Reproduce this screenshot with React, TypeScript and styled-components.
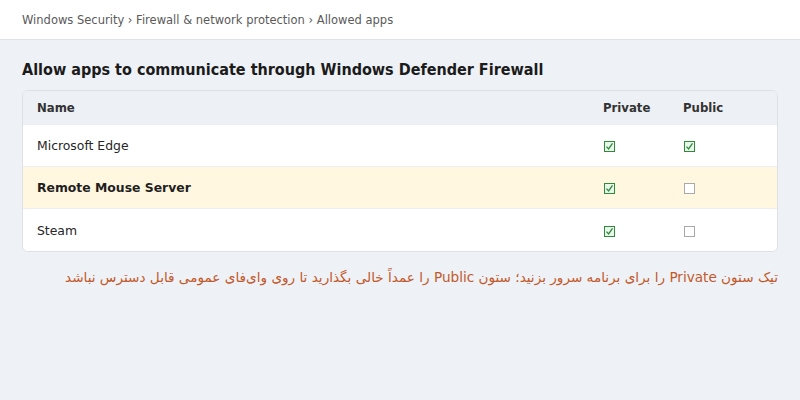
import React from "react";
import styled, { createGlobalStyle } from "styled-components";

const Global = createGlobalStyle`
  html, body { margin: 0; padding: 0; }
  body {
    background: #eef1f5;
    font-family: "DejaVu Sans", Verdana, sans-serif;
    width: 800px;
    height: 400px;
    overflow: hidden;
  }
`;

const Page = styled.div`
  width: 800px;
  height: 400px;
  background: #eef1f5;
  display: flex;
  flex-direction: column;
`;

const TopBar = styled.div`
  height: 40px;
  background: #ffffff;
  border-bottom: 1px solid #dfe3e8;
  display: flex;
  align-items: center;
  padding: 1px 22px 0;
  font-size: 11.5px;
  color: #5a5a5a;
  box-sizing: border-box;
`;

const Content = styled.div`
  padding: 20px 22px 0;
  display: flex;
  flex-direction: column;
`;

const Title = styled.h1`
  margin: 0 0 10px;
  font-family: "DejaVu Sans Condensed", "DejaVu Sans", sans-serif;
  font-size: 16px;
  font-weight: bold;
  color: #1b1b1b;
  line-height: 20px;
`;

const Card = styled.div`
  background: #ffffff;
  border: 1px solid #dde1e6;
  border-radius: 6px;
  overflow: hidden;
`;

const Row = styled.div<{ $kind?: "head" | "hl" | "plain"; $last?: boolean }>`
  display: grid;
  grid-template-columns: 1fr 80px 94px;
  align-items: center;
  height: ${(p) => (p.$kind === "head" ? "34px" : "42px")};
  padding-left: 14px;
  box-sizing: border-box;
  background: ${(p) =>
    p.$kind === "head" ? "#edf0f4" : p.$kind === "hl" ? "#fff7e0" : "#ffffff"};
  border-bottom: ${(p) => (p.$last ? "none" : "1px solid #eceff2")};
  font-size: 12.4px;
  color: #222;
`;

const Name = styled.div<{ $bold?: boolean }>`
  font-weight: ${(p) => (p.$bold ? "bold" : "normal")};
  color: ${(p) => (p.$bold ? "#1f1f1f" : "#262626")};
`;

const HeadCell = styled.div`
  font-family: "DejaVu Sans Condensed", "DejaVu Sans", sans-serif;
  font-size: 13px;
  font-weight: bold;
  color: #333;
`;

const BoxCell = styled.div`
  display: flex;
  align-items: center;
  padding: 2px 0 0 1px;
`;

const Box = styled.span<{ $on: boolean }>`
  display: inline-flex;
  align-items: center;
  justify-content: center;
  width: 11px;
  height: 11px;
  box-sizing: border-box;
  border: 1px solid ${(p) => (p.$on ? "#2f8a3c" : "#a9a9a9")};
  background: ${(p) => (p.$on ? "#e9f6ea" : "#ffffff")};
`;

const Note = styled.p`
  margin: 17px 0 0;
  direction: rtl;
  text-align: right;
  font-size: 13.6px;
  color: #c2592b;
  font-family: "DejaVu Sans", sans-serif;
`;

const Check = ({ on }: { on: boolean }) => (
  <BoxCell>
    <Box $on={on}>
      {on && (
        <svg width="9" height="9" viewBox="0 0 9 9">
          <path d="M1.5 4.6 L3.6 6.9 L7.5 1.4" fill="none" stroke="#2f8a3c" strokeWidth="1.3" />
        </svg>
      )}
    </Box>
  </BoxCell>
);

const apps = [
  { name: "Microsoft Edge", priv: true, pub: true, hl: false },
  { name: "Remote Mouse Server", priv: true, pub: false, hl: true },
  { name: "Steam", priv: true, pub: false, hl: false },
];

export default function App() {
  return (
    <Page>
      <Global />
      <TopBar>Windows Security › Firewall &amp; network protection › Allowed apps</TopBar>
      <Content>
        <Title>Allow apps to communicate through Windows Defender Firewall</Title>
        <Card>
          <Row $kind="head">
            <HeadCell>Name</HeadCell>
            <HeadCell>Private</HeadCell>
            <HeadCell>Public</HeadCell>
          </Row>
          {apps.map((a, i) => (
            <Row key={a.name} $kind={a.hl ? "hl" : "plain"} $last={i === apps.length - 1}>
              <Name $bold={a.hl}>{a.name}</Name>
              <Check on={a.priv} />
              <Check on={a.pub} />
            </Row>
          ))}
        </Card>
        <Note>
          تیک ستون Private را برای برنامه سرور بزنید؛ ستون Public را عمداً خالی بگذارید تا روی وای‌فای عمومی قابل دسترس نباشد
        </Note>
      </Content>
    </Page>
  );
}
